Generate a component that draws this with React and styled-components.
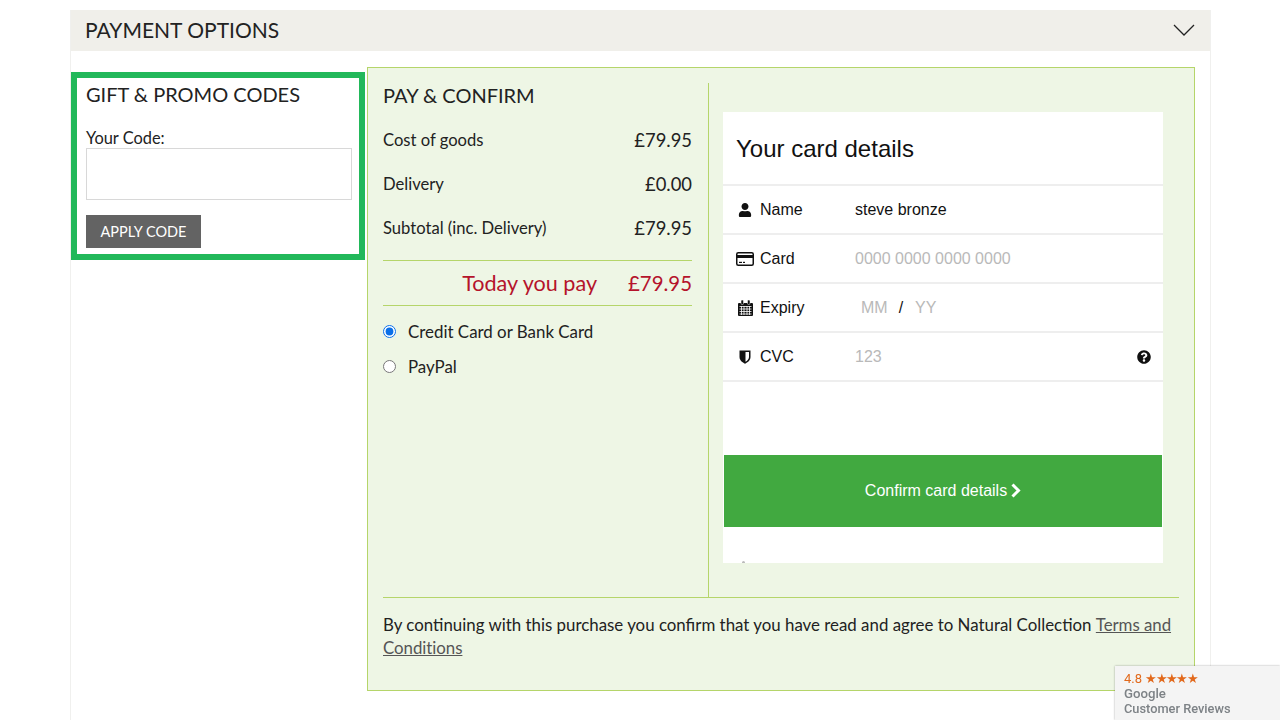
import React from 'react';
import styled, { createGlobalStyle } from 'styled-components';
import { FaUser, FaQuestionCircle } from 'react-icons/fa';

const Global = createGlobalStyle`
  html, body { margin: 0; padding: 0; background: #fff; height: 720px; overflow: hidden; }
  * { box-sizing: border-box; }
  body { font-family: "Lato", "Noto Sans", sans-serif; color: #222; }
`;

const Page = styled.div`
  width: 1141px;
  height: 710px;
  margin: 10px 0 0 70px;
  border-left: 1px solid #f0f0ee;
  border-right: 1px solid #f0f0ee;
`;
const Header = styled.div`
  height: 41px;
  background: #f0efea;
  display: flex;
  align-items: center;
  justify-content: space-between;
  padding: 0 15px 2px 14px;
  font-size: 21px;
  color: #222;
`;
const Columns = styled.div`
  display: flex;
  align-items: flex-start;
  margin-top: 16px;
`;
const PromoBox = styled.section`
  width: 294px;
  height: 188px;
  margin-top: 5px;
  margin-right: 2px;
  border: 6px solid #22b85a;
  padding: 0 9px;
`;
const SectionTitle = styled.h2`
  margin: 0;
  font-weight: 400;
  font-size: 20px;
  line-height: 24px;
  color: #222;
`;
const PromoTitle = styled(SectionTitle)`
  margin-top: 4px;
`;
const CodeLabel = styled.label`
  display: block;
  font-size: 16.4px;
  line-height: 20px;
  margin-top: 22px;
`;
const CodeInput = styled.div`
  width: 266px;
  height: 52px;
  border: 1px solid #d8d8d8;
  background: #fff;
`;
const ApplyButton = styled.button`
  display: block;
  width: 115px;
  height: 33px;
  margin-top: 15px;
  border: 0;
  background: #636363;
  color: #fff;
  font: 400 14.5px "Lato", sans-serif;
  padding: 0;
`;
const Panel = styled.section`
  width: 828px;
  height: 624px;
  border: 1px solid #b5d56a;
  background: #eef6e5;
  padding: 15px 15px 0;
`;
const Top = styled.div`
  display: flex;
  height: 514px;
  align-items: flex-start;
`;
const Summary = styled.div`
  width: 326px;
  height: 100%;
  padding-right: 16px;
  border-right: 1px solid #b5d56a;
`;
const SummaryRow = styled.div`
  display: flex;
  justify-content: space-between;
  align-items: center;
  height: 44px;
  font-size: 16.6px;
  &:first-of-type { margin-top: 11px; }
`;
const Price = styled.span`
  font-size: 18.4px;
`;
const TodayRow = styled.div`
  display: flex;
  justify-content: flex-end;
  align-items: center;
  gap: 31px;
  height: 46px;
  margin-top: 10px;
  border-top: 1px solid #b5d56a;
  border-bottom: 1px solid #b5d56a;
  color: #b5132b;
`;
const TodayLabel = styled.span`
  font-size: 21.6px;
`;
const TodayPrice = styled.span`
  font-size: 20.4px;
`;
const RadioRow = styled.label`
  display: flex;
  align-items: center;
  gap: 12px;
  height: 35px;
  font-size: 16.9px;
  &:first-of-type { margin-top: 8px; }
  input { margin: 0; width: 13px; height: 13px; accent-color: #0a6fe8; }
`;
const Card = styled.div`
  width: 440px;
  height: 451px;
  margin: 29px 0 0 14px;
  background: #fff;
  position: relative;
  font-family: "Liberation Sans", Arial, sans-serif;
  color: #111;
  &::after {
    content: "";
    position: absolute;
    left: 19px;
    bottom: 0;
    width: 3px;
    height: 2px;
    border-radius: 2px 2px 0 0;
    background: #bbb;
  }
`;
const CardTitle = styled.div`
  height: 72px;
  padding-left: 13px;
  font-size: 24px;
  line-height: 73px;
`;
const CardRow = styled.div`
  display: flex;
  align-items: center;
  height: 49px;
  border-top: 2px solid #eeeeee;
  font-size: 16px;
  &:last-of-type { border-bottom: 2px solid #eeeeee; height: 51px; }
`;
const IconCell = styled.span`
  width: 37px;
  padding-left: 13px;
  flex: none;
  display: flex;
  align-items: center;
`;
const IconBox = styled.span`
  width: 18px;
  display: flex;
  justify-content: center;
`;
const RowLabel = styled.span`
  width: 95px;
  flex: none;
`;
const Placeholder = styled.span`
  color: #b9b9b9;
  margin-left: ${p => p.$indent || 0}px;
`;
const Slash = styled.span`
  margin: 0 12px 0 11px;
`;
const HelpIcon = styled.span`
  margin-left: auto;
  padding-right: 12px;
  display: flex;
`;
const ConfirmButton = styled.button`
  display: flex;
  align-items: center;
  justify-content: center;
  gap: 3px;
  width: 438px;
  height: 72px;
  margin: 73px 0 0 1px;
  border: 0;
  background: #41a940;
  color: #fff;
  font: 400 16px "Liberation Sans", Arial, sans-serif;
  padding: 0;
  svg { margin-bottom: 2px; }
`;
const Footer = styled.p`
  margin: 0;
  border-top: 1px solid #b5d56a;
  padding-top: 15px;
  font-size: 16.88px;
  line-height: 23px;
  color: #222;
  a { color: #555; text-decoration: underline; letter-spacing: -0.05px; }
`;
const Badge = styled.aside`
  position: fixed;
  right: 0;
  bottom: 0;
  width: 165px;
  height: 54px;
  padding: 6px 0 0 9px;
  background: #f4f4f4;
  box-shadow: 0 0 2px rgba(0,0,0,.35);
  font-family: "Roboto", sans-serif;
  font-weight: 500;
  color: #7d8286;
  font-size: 13.2px;
  line-height: 15px;
`;
const Rating = styled.div`
  color: #e2691c;
  font-size: 13px;
  font-weight: 400;
  line-height: 14px;
`;
const Stars = styled.span`
  letter-spacing: -1.6px;
  font-size: 12.5px;
`;
const ReviewsLine = styled.div`
  font-size: 12.8px;
`;

const CardIcon = () => (
  <svg width="18" height="14" viewBox="0 0 18 14"><rect x="0.75" y="0.75" width="16.5" height="12.5" rx="1.5" fill="none" stroke="#111" strokeWidth="1.5"/><rect x="1" y="3" width="16" height="3" fill="#111"/><rect x="3" y="9.8" width="3" height="1.2" fill="#111"/><rect x="7" y="9.8" width="2" height="1.2" fill="#111"/></svg>
);
const CalendarIcon = () => (
  <svg width="15" height="16" viewBox="0 0 15 16"><path d="M1 3h13a1 1 0 0 1 1 1v11a1 1 0 0 1-1 1H1a1 1 0 0 1-1-1V4a1 1 0 0 1 1-1z" fill="#111"/><rect x="3" y="0" width="2.5" height="4.5" rx="1" fill="#111" stroke="#fff" strokeWidth=".5"/><rect x="9.5" y="0" width="2.5" height="4.5" rx="1" fill="#111" stroke="#fff" strokeWidth=".5"/><path d="M1.5 6.5h12M1.5 9h12M1.5 11.5h12M1.5 14h12M3.5 6v9M6 6v9M9 6v9M11.5 6v9" stroke="#fff" strokeWidth=".8"/></svg>
);
const ShieldIcon = () => (
  <svg width="12" height="14" viewBox="0 0 12 14"><path d="M0.5 0.5h11v6.5c0 3.3-3 5.5-5.5 6.7C3.500 12.500 0.5 10.300 0.5 7z" fill="#111"/><path d="M6.500 2h3.500v5c0 2.200-1.800 3.800-3.500 4.800z" fill="#fff"/></svg>
);
const ChevronRight = () => (
  <svg width="11" height="15" viewBox="0 0 11 15" fill="none" stroke="#fff" strokeWidth="3"><path d="M2.500 1.500l6 6-6 6"/></svg>
);
const Chevron = () => (
  <svg width="22" height="14" viewBox="0 0 22 14" fill="none" stroke="#222" strokeWidth="1.3"><path d="M1 2l10 10L21 2"/></svg>
);

export default function App() {
  return (
    <>
      <Global />
      <Page>
        <Header>PAYMENT OPTIONS<Chevron /></Header>
        <Columns>
          <PromoBox>
            <PromoTitle>GIFT &amp; PROMO CODES</PromoTitle>
            <CodeLabel>Your Code:</CodeLabel>
            <CodeInput />
            <ApplyButton>APPLY CODE</ApplyButton>
          </PromoBox>
          <Panel>
            <Top>
              <Summary>
                <SectionTitle>PAY &amp; CONFIRM</SectionTitle>
                <SummaryRow><span>Cost of goods</span><Price>£79.95</Price></SummaryRow>
                <SummaryRow><span>Delivery</span><Price>£0.00</Price></SummaryRow>
                <SummaryRow><span>Subtotal (inc. Delivery)</span><Price>£79.95</Price></SummaryRow>
                <TodayRow><TodayLabel>Today you pay</TodayLabel><TodayPrice>£79.95</TodayPrice></TodayRow>
                <RadioRow><input type="radio" name="pay" defaultChecked />Credit Card or Bank Card</RadioRow>
                <RadioRow><input type="radio" name="pay" />PayPal</RadioRow>
              </Summary>
              <Card>
                <CardTitle>Your card details</CardTitle>
                <CardRow><IconCell><IconBox><FaUser size={14} /></IconBox></IconCell><RowLabel>Name</RowLabel><span>steve bronze</span></CardRow>
                <CardRow><IconCell><IconBox><CardIcon /></IconBox></IconCell><RowLabel>Card</RowLabel><Placeholder>0000 0000 0000 0000</Placeholder></CardRow>
                <CardRow><IconCell><IconBox><CalendarIcon /></IconBox></IconCell><RowLabel>Expiry</RowLabel><Placeholder $indent={6}>MM</Placeholder><Slash>/</Slash><Placeholder>YY</Placeholder></CardRow>
                <CardRow><IconCell><IconBox><ShieldIcon /></IconBox></IconCell><RowLabel>CVC</RowLabel><Placeholder>123</Placeholder><HelpIcon><FaQuestionCircle size={14} /></HelpIcon></CardRow>
                <ConfirmButton>Confirm card details <ChevronRight /></ConfirmButton>
              </Card>
            </Top>
            <Footer>By continuing with this purchase you confirm that you have read and agree to Natural Collection <a href="#terms">Terms and Conditions</a></Footer>
          </Panel>
        </Columns>
      </Page>
      <Badge>
        <Rating>4.8 <Stars>★★★★★</Stars></Rating>
        <div>Google</div>
        <ReviewsLine>Customer Reviews</ReviewsLine>
      </Badge>
    </>
  );
}
